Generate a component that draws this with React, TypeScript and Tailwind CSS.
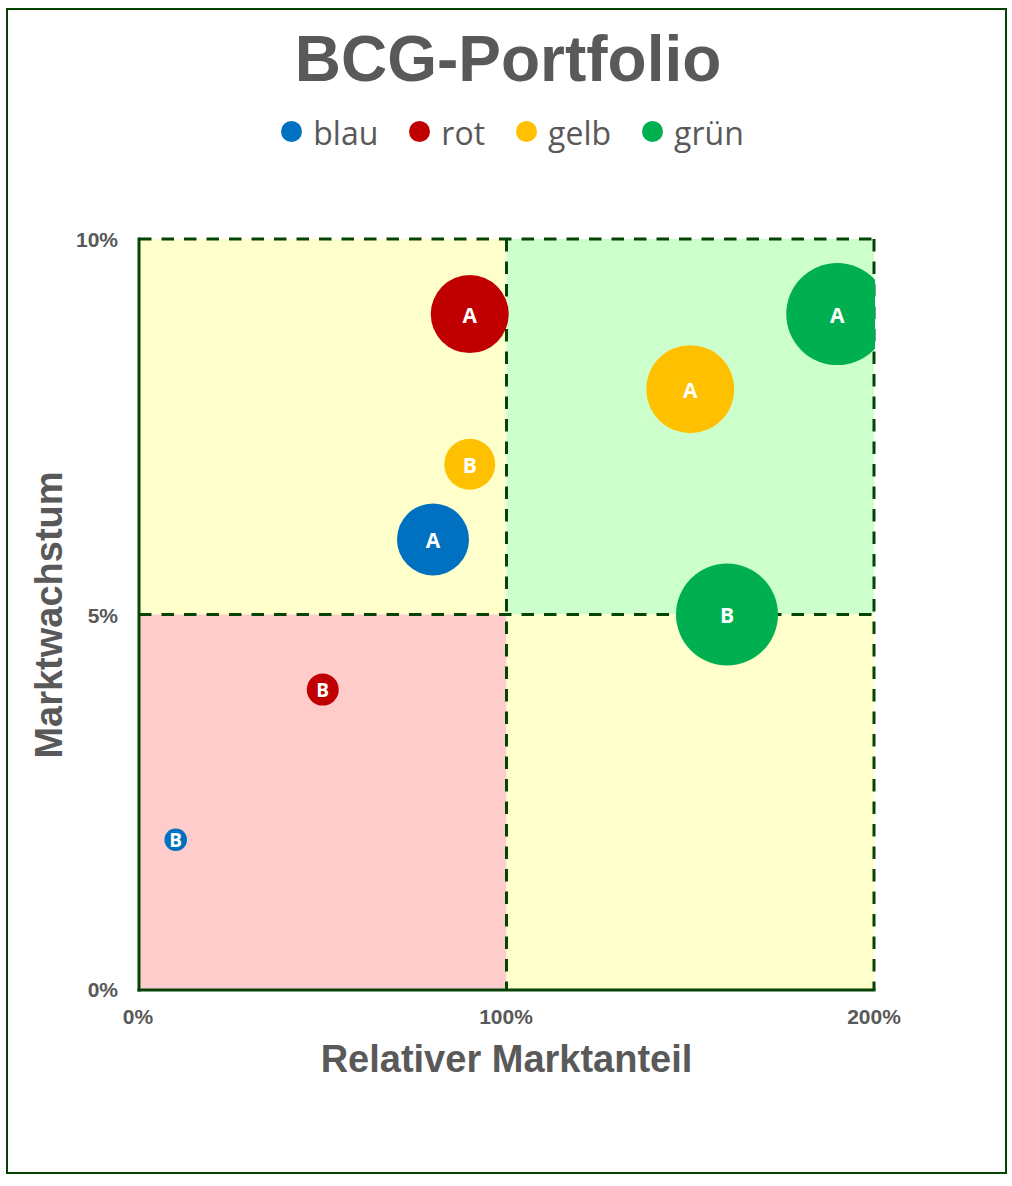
const plot = { left: 139, right: 874, top: 239, bottom: 990 };
const midX = (plot.left + plot.right) / 2;
const midY = (plot.top + plot.bottom) / 2;

// x: relativer Marktanteil 0..200 %, y: Marktwachstum 0..10 %
const px = (v: number) => plot.left + (v / 200) * (plot.right - plot.left);
const py = (v: number) => plot.bottom - (v / 10) * (plot.bottom - plot.top);

const legend = [
  { name: "blau", color: "#0070c0" },
  { name: "rot", color: "#c00000" },
  { name: "gelb", color: "#ffc000" },
  { name: "grün", color: "#00b050" },
];

const bubbles = [
  { label: "A", color: "#0070c0", x: 80, y: 6, r: 36, fs: 21 },
  { label: "B", color: "#0070c0", x: 10, y: 2, r: 11.3, fs: 19 },
  { label: "A", color: "#c00000", x: 90, y: 9, r: 39, fs: 21 },
  { label: "B", color: "#c00000", x: 50, y: 4, r: 16, fs: 19 },
  { label: "A", color: "#ffc000", x: 150, y: 8, r: 44, fs: 21 },
  { label: "B", color: "#ffc000", x: 90, y: 7, r: 25.5, fs: 21 },
  { label: "A", color: "#00b050", x: 190, y: 9, r: 51, fs: 21 },
  { label: "B", color: "#00b050", x: 160, y: 5, r: 51, fs: 21 },
];

const line = "#064406";

const Chart = () => {
  const w = plot.right - plot.left;
  const h = plot.bottom - plot.top;
  return (
    <svg width={915} height={810} viewBox="90 225 915 810" className="shrink-0 overflow-visible">
      <defs>
        <clipPath id="plot-clip">
          <rect x={plot.left} y={plot.top - 2} width={w + 1} height={h + 2} />
        </clipPath>
      </defs>

      {/* quadrants */}
      <rect x={plot.left} y={plot.top} width={w / 2} height={h / 2} fill="#ffffcc" />
      <rect x={midX} y={plot.top} width={w / 2} height={h / 2} fill="#ccffcc" />
      <rect x={plot.left} y={midY} width={w / 2} height={h / 2} fill="#ffcccc" />
      <rect x={midX} y={midY} width={w / 2} height={h / 2} fill="#ffffcc" />

      {/* grid */}
      <g stroke={line} strokeWidth={3} strokeDasharray="12.5 10">
        <line x1={plot.left} y1={plot.top} x2={plot.right} y2={plot.top} />
        <line x1={plot.left} y1={midY} x2={plot.right} y2={midY} />
        <line x1={midX} y1={plot.top} x2={midX} y2={plot.bottom} />
        <line x1={plot.right} y1={plot.top} x2={plot.right} y2={plot.bottom} />
      </g>
      <g stroke={line} strokeWidth={3}>
        <line x1={plot.left} y1={plot.top - 1.5} x2={plot.left} y2={plot.bottom + 1.5} />
        <line x1={plot.left - 1.5} y1={plot.bottom} x2={plot.right + 1.5} y2={plot.bottom} />
      </g>

      {/* bubbles */}
      <g clipPath="url(#plot-clip)">
        {bubbles.map((b, i) => (
          <circle key={i} cx={px(b.x)} cy={py(b.y)} r={b.r} fill={b.color} />
        ))}
      </g>
      <g className="font-['Open_Sans',sans-serif] font-bold fill-white" textAnchor="middle">
        {bubbles.map((b, i) => (
          <text key={i} x={px(b.x)} y={py(b.y) + (b.fs > 20 ? 8.5 : 7.5)} fontSize={b.fs}>
            {b.label}
          </text>
        ))}
      </g>

      {/* tick labels */}
      <g className="font-['Liberation_Sans',Arial,sans-serif] font-bold fill-[#595959]" fontSize={21}>
        <text x={118} y={247} textAnchor="end">10%</text>
        <text x={118} y={623} textAnchor="end">5%</text>
        <text x={118} y={997} textAnchor="end">0%</text>
        <text x={138} y={1024} textAnchor="middle">0%</text>
        <text x={506} y={1024} textAnchor="middle">100%</text>
        <text x={874} y={1024} textAnchor="middle">200%</text>
      </g>
    </svg>
  );
};

export default function App() {
  return (
    <div className="w-[1012px] h-[1186px] bg-white pt-[8px] pl-[6px]">
      <div className="w-[1001px] h-[1166px] border-2 border-[#064406] flex flex-col text-[#595959] font-['Liberation_Sans',Arial,sans-serif]">
        <h1 className="mt-[17px] pl-[3px] text-center text-[64px] leading-[64px] font-bold">
          BCG-Portfolio
        </h1>

        <div className="mt-[26px] pl-[12px] flex justify-center items-center gap-[31px] font-['Open_Sans',sans-serif] text-[32px] leading-[31px]">
          {legend.map((l) => (
            <div key={l.name} className="flex items-center gap-[11px]">
              <span className="w-[21px] h-[21px] rounded-full -mt-[3px]" style={{ backgroundColor: l.color }} />
              <span>{l.name}</span>
            </div>
          ))}
        </div>

        <div className="mt-[77px] flex items-start">
          <div className="w-[82px] h-[751px] mt-[14px] flex items-center justify-center shrink-0">
            <span className="-rotate-90 whitespace-nowrap text-[38px] leading-[38px] font-bold">
              Marktwachstum
            </span>
          </div>
          <Chart />
        </div>

        <div className="mt-[5px] text-center text-[38px] leading-[38px] font-bold">
          Relativer Marktanteil
        </div>
      </div>
    </div>
  );
}
